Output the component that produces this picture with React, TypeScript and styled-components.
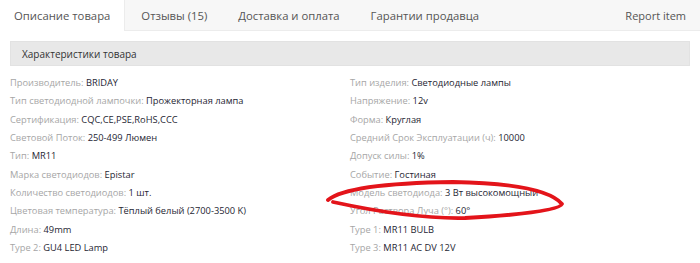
import React from 'react';
import styled, { createGlobalStyle } from 'styled-components';

const GlobalStyle = createGlobalStyle`
  body {
    margin: 0;
    background: #ffffff;
    font-family: "Open Sans", "Liberation Sans", sans-serif;
  }
`;

const Page = styled.div`
  position: relative;
  width: 700px;
  height: 263px;
  overflow: hidden;
  background: #fff;
`;

const TabBar = styled.div`
  display: flex;
  align-items: stretch;
  height: 30px;
  background: #f7f7f7;
  border-bottom: 1px solid #ececec;
`;

const Tab = styled.div<{ $active?: boolean }>`
  display: flex;
  align-items: center;
  padding: ${(p) => (p.$active ? '0 14px' : '0 15px')};
  margin-left: ${(p) => (p.$active ? '0' : '1px')};
  font-size: 11.3px;
  color: #555;
  background: ${(p) => (p.$active ? '#fff' : 'transparent')};
  margin-bottom: ${(p) => (p.$active ? '-1px' : '0')};
  border-right: ${(p) => (p.$active ? '1px solid #ececec' : 'none')};
`;

const Report = styled.div`
  margin-left: auto;
  display: flex;
  align-items: center;
  padding-right: 14px;
  font-size: 11px;
  color: #555;
`;

const Body = styled.div`
  padding: 10px 10px 0 10px;
`;

const Header = styled.div`
  height: 23px;
  display: flex;
  align-items: center;
  padding-left: 11px;
  background: #e8e8e8;
  border: 1px solid #e2e2e2;
  font-size: 10px;
  color: #333;
`;

const Grid = styled.div`
  display: grid;
  grid-template-columns: 340px 1fr;
  margin-top: 8px;
`;

const Column = styled.div`
  display: flex;
  flex-direction: column;
`;

const Row = styled.div`
  height: 18.35px;
  line-height: 18.35px;
  font-size: 9.3px;
  white-space: nowrap;
`;

const Label = styled.span`
  color: #a6a6a6;
`;

const Value = styled.span`
  color: #262633;
`;

const Scribble = styled.svg`
  position: absolute;
  left: 0;
  top: 0;
  pointer-events: none;
`;

const left: [string, string][] = [
  ['Производитель', 'BRIDAY'],
  ['Тип светодиодной лампочки', 'Прожекторная лампа'],
  ['Сертификация', 'CQC,CE,PSE,RoHS,CCC'],
  ['Световой Поток', '250-499 Люмен'],
  ['Тип', 'MR11'],
  ['Марка светодиодов', 'Epistar'],
  ['Количество светодиодов', '1 шт.'],
  ['Цветовая температура', 'Тёплый белый (2700-3500 K)'],
  ['Длина', '49mm'],
  ['Type 2', 'GU4 LED Lamp'],
];

const right: [string, string][] = [
  ['Тип изделия', 'Светодиодные лампы'],
  ['Напряжение', '12v'],
  ['Форма', 'Круглая'],
  ['Средний Срок Эксплуатации (ч)', '10000'],
  ['Допуск силы', '1%'],
  ['Событие', 'Гостиная'],
  ['Модель светодиода', '3 Вт высокомощный'],
  ['Угол Раствора Луча (°)', '60°'],
  ['Type 1', 'MR11 BULB'],
  ['Type 3', 'MR11 AC DV 12V'],
];

const renderRows = (rows: [string, string][]) =>
  rows.map(([k, v]) => (
    <Row key={k}>
      <Label>{k}: </Label>
      <Value>{v}</Value>
    </Row>
  ));

const App: React.FC = () => {
  return (
    <Page>
      <GlobalStyle />
      <TabBar>
        <Tab $active>Описание товара</Tab>
        <Tab>Отзывы (15)</Tab>
        <Tab>Доставка и оплата</Tab>
        <Tab>Гарантии продавца</Tab>
        <Report>Report item</Report>
      </TabBar>
      <Body>
        <Header>Характеристики товара</Header>
        <Grid>
          <Column>{renderRows(left)}</Column>
          <Column>{renderRows(right)}</Column>
        </Grid>
      </Body>
      {/* hand-drawn red marker around two rows */}
      <Scribble width="700" height="263" viewBox="0 0 700 263">
        <path
          d="M328 200 C 340 190, 380 183, 453 182 C 510 183, 550 190, 562 204 C 560 210, 520 215, 465 218 C 420 219, 370 210, 333 202"
          fill="none"
          stroke="#e3141a"
          strokeWidth="3.8"
          strokeLinecap="round"
          strokeLinejoin="round"
        />
      </Scribble>
    </Page>
  );
};

export default App;
